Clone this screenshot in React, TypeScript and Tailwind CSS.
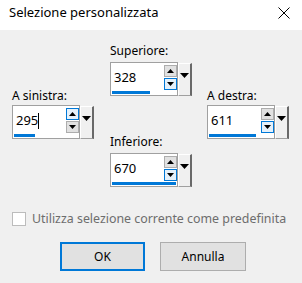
import React from 'react';

type Hi = 'up' | 'down';

const Tri = ({ dir, w, h }: { dir: 'up' | 'down'; w: number; h: number }) => (
  <svg width={w} height={h} viewBox={`0 0 ${w} ${h}`} className="block">
    {dir === 'up' ? (
      <polygon points={`0,${h} ${w / 2},0 ${w},${h}`} fill="#000" />
    ) : (
      <polygon points={`0,0 ${w},0 ${w / 2},${h}`} fill="#000" />
    )}
  </svg>
);

const SpinBtn = ({ dir, active }: { dir: 'up' | 'down'; active: boolean }) => (
  <div
    className={`w-[13px] h-[12px] flex items-center justify-center border ${
      active ? 'bg-[#e5f1fb] border-[#0078d7]' : 'bg-[#e1e1e1] border-[#adadad]'
    }`}
  >
    <Tri dir={dir} w={7} h={4} />
  </div>
);

interface FieldProps {
  label: string;
  value: string;
  pct: number;
  hi: Hi;
  cursor?: boolean;
  labelGap?: string;
}

const Field = ({ label, value, pct, hi, cursor, labelGap = 'h-[19px]' }: FieldProps) => (
  <div className="flex flex-col w-[82px]">
    <div className={`${labelGap} text-[12px] leading-[16px] text-black`}>{label}</div>
    <div className="flex">
      {/* text box with spinner */}
      <div className="w-[68px] h-[34px] bg-white border border-[#a0a0a0] flex flex-col">
        <div className="flex h-[28px]">
          <div className="flex-1 flex items-center pl-[3px] pt-[2px] text-[13px] text-black">
            {value}
            {cursor && <span className="inline-block w-px h-[16px] bg-black" />}
          </div>
          <div className="flex flex-col gap-px pt-[2px]">
            <SpinBtn dir="up" active={hi === 'up'} />
            <SpinBtn dir="down" active={hi === 'down'} />
          </div>
        </div>
        <div className="h-[3px] mx-px">
          <div className="h-full bg-[#0078d7]" style={{ width: `${pct}%` }} />
        </div>
      </div>
      {/* dropdown button */}
      <div className="w-[14px] h-[33px] mt-px bg-[#f0f0f0] border-l border-t border-l-white border-t-white border-r-2 border-b border-r-[#696969] border-b-[#a0a0a0] flex justify-center pt-[9px]">
        <Tri dir="down" w={9} h={5} />
      </div>
    </div>
  </div>
);

export default function App() {
  return (
    <div className="w-[302px] h-[283px] bg-[#f0f0f0] flex flex-col font-['Noto_Sans',sans-serif] overflow-hidden">
      {/* Title bar */}
      <div className="h-[30px] bg-white flex items-start justify-between pl-[9px] pr-[12px] pt-[3px]">
        <span className="text-[13px] leading-[18px] text-black">Selezione personalizzata</span>
        <svg width="12" height="12" viewBox="0 0 12 12" className="mt-[4px]">
          <path d="M0.5 0.5 L11.5 11.5 M11.5 0.5 L0.5 11.5" stroke="#000" strokeWidth="1" />
        </svg>
      </div>

      {/* Margins */}
      <div className="flex pl-[12px] pt-[13px] gap-[16px]">
        <div className="mt-[45px]">
          <Field label="A sinistra:" value="295" pct={33} hi="up" cursor labelGap="h-[17px]" />
        </div>
        <div className="flex flex-col gap-[38px]">
          <Field label="Superiore:" value="328" pct={59} hi="down" />
          <Field label="Inferiore:" value="670" pct={100} hi="down" />
        </div>
        <div className="mt-[45px] -ml-px">
          <Field label="A destra:" value="611" pct={73} hi="down" labelGap="h-[17px]" />
        </div>
      </div>

      {/* Checkbox */}
      <div className="flex items-center pl-[12px] mt-[24px] gap-[6px]">
        <div className="w-[14px] h-[14px] bg-white border border-[#bcbcbc]" />
        <span className="text-[12.4px] leading-[16px] text-[#6d6d6d]">
          Utilizza selezione corrente come predefinita
        </span>
      </div>

      {/* Buttons */}
      <div className="flex pl-[60px] gap-[15px] mt-[15px]">
        <button className="w-[85px] h-[29px] bg-[#e1e1e1] border-2 border-[#0078d7] text-[12px] text-black">
          OK
        </button>
        <button className="w-[86px] h-[29px] bg-[#e1e1e1] border border-[#adadad] text-[12px] text-black">
          Annulla
        </button>
      </div>
    </div>
  );
}
